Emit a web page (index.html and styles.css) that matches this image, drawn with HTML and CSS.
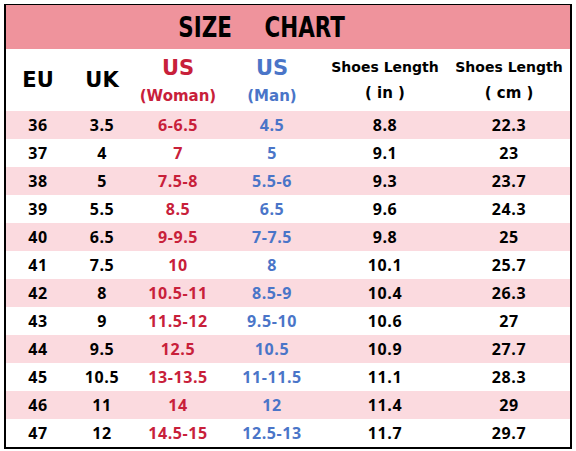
FILE: index.html
```html
<!DOCTYPE html>
<html lang="en">
<head>
    <meta charset="UTF-8">
    <title>Size Chart</title>
    <link rel="stylesheet" href="styles.css">
</head>
<body>

    <div class="chart">
        <div class="title"><span class="title-text">SIZE<span class="title-gap"></span>CHART</span></div>

        <div class="row head-row">
            <div class="cell big">EU</div>
            <div class="cell big">UK</div>
            <div class="cell woman"><span class="big">US</span><span class="sub">(Woman)</span></div>
            <div class="cell man"><span class="big">US</span><span class="sub">(Man)</span></div>
            <div class="cell"><span class="len">Shoes Length</span><span class="unit">( in )</span></div>
            <div class="cell"><span class="len">Shoes Length</span><span class="unit">( cm )</span></div>
        </div>

        <div class="row pink"><div class="cell num">36</div><div class="cell num">3.5</div><div class="cell num woman">6-6.5</div><div class="cell num man">4.5</div><div class="cell num">8.8</div><div class="cell num">22.3</div></div>
        <div class="row"><div class="cell num">37</div><div class="cell num">4</div><div class="cell num woman">7</div><div class="cell num man">5</div><div class="cell num">9.1</div><div class="cell num">23</div></div>
        <div class="row pink"><div class="cell num">38</div><div class="cell num">5</div><div class="cell num woman">7.5-8</div><div class="cell num man">5.5-6</div><div class="cell num">9.3</div><div class="cell num">23.7</div></div>
        <div class="row"><div class="cell num">39</div><div class="cell num">5.5</div><div class="cell num woman">8.5</div><div class="cell num man">6.5</div><div class="cell num">9.6</div><div class="cell num">24.3</div></div>
        <div class="row pink"><div class="cell num">40</div><div class="cell num">6.5</div><div class="cell num woman">9-9.5</div><div class="cell num man">7-7.5</div><div class="cell num">9.8</div><div class="cell num">25</div></div>
        <div class="row"><div class="cell num">41</div><div class="cell num">7.5</div><div class="cell num woman">10</div><div class="cell num man">8</div><div class="cell num">10.1</div><div class="cell num">25.7</div></div>
        <div class="row pink"><div class="cell num">42</div><div class="cell num">8</div><div class="cell num woman">10.5-11</div><div class="cell num man">8.5-9</div><div class="cell num">10.4</div><div class="cell num">26.3</div></div>
        <div class="row"><div class="cell num">43</div><div class="cell num">9</div><div class="cell num woman">11.5-12</div><div class="cell num man">9.5-10</div><div class="cell num">10.6</div><div class="cell num">27</div></div>
        <div class="row pink"><div class="cell num">44</div><div class="cell num">9.5</div><div class="cell num woman">12.5</div><div class="cell num man">10.5</div><div class="cell num">10.9</div><div class="cell num">27.7</div></div>
        <div class="row"><div class="cell num">45</div><div class="cell num">10.5</div><div class="cell num woman">13-13.5</div><div class="cell num man">11-11.5</div><div class="cell num">11.1</div><div class="cell num">28.3</div></div>
        <div class="row pink"><div class="cell num">46</div><div class="cell num">11</div><div class="cell num woman">14</div><div class="cell num man">12</div><div class="cell num">11.4</div><div class="cell num">29</div></div>
        <div class="row"><div class="cell num">47</div><div class="cell num">12</div><div class="cell num woman">14.5-15</div><div class="cell num man">12.5-13</div><div class="cell num">11.7</div><div class="cell num">29.7</div></div>
    </div>

</body>
</html>
```

FILE: styles.css
```css
body {
    margin: 0;
    background-color: #fff;
    color: #000;
    font-family: 'Liberation Sans', Arial, sans-serif;
}

.chart {
    box-sizing: border-box;
    width: 568px;
    margin: 4px 0 0 4px;
    border: 2px solid #000;
    border-top-width: 1px;
}

.title {
    height: 44px;
    background-color: #ef939c;
    display: flex;
    justify-content: center;
    align-items: center;
    padding-right: 52px;
}

.title-text {
    display: inline-block;
    font-family: 'DejaVu Sans Condensed', 'DejaVu Sans', sans-serif;
    font-stretch: condensed;
    font-weight: bold;
    font-size: 29px;
    transform: scaleX(0.82);
}

.title-gap {
    display: inline-block;
    width: 40px;
}

.row {
    display: grid;
    grid-template-columns: 64px 64px 88px 100px 126px 122px;
    height: 28px;
}

.row.pink {
    background-color: #fbdadf;
}

.head-row {
    height: 62px;
}

.cell {
    display: flex;
    flex-direction: column;
    justify-content: center;
    align-items: center;
    white-space: nowrap;
}

.big {
    font-family: 'DejaVu Sans', sans-serif;
    font-weight: bold;
    font-size: 21px;
}

.sub {
    font-family: 'DejaVu Sans', sans-serif;
    font-weight: bold;
    font-size: 15px;
    margin-top: 7px;
}

.len {
    font-family: 'DejaVu Sans', sans-serif;
    font-weight: bold;
    font-size: 14px;
}

.unit {
    font-family: 'DejaVu Sans', sans-serif;
    font-weight: bold;
    font-size: 15px;
    margin-top: 9px;
    white-space: pre;
}

.num {
    font-family: 'Open Sans', sans-serif;
    font-weight: bold;
    font-size: 16px;
    letter-spacing: 0.6px;
}

.woman {
    color: #c8203a;
}

.man {
    color: #4a75c8;
}
```
